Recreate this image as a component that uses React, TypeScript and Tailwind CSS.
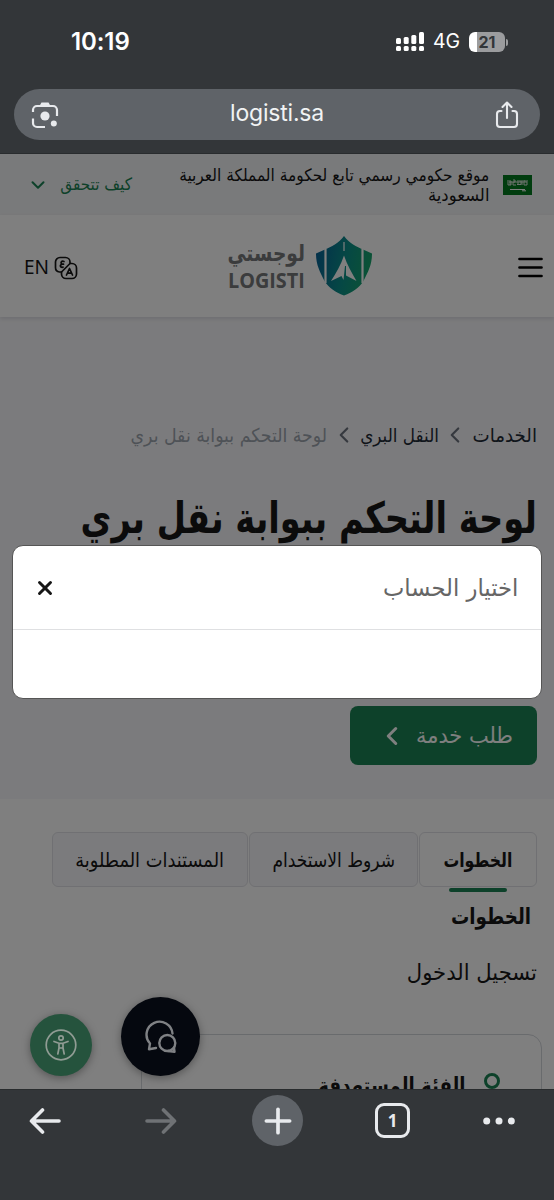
import { ReactNode } from 'react'
import { ChevronDown, ChevronLeft, Plus, X } from 'lucide-react'

function StatusBar() {
  return (
    <div className="flex h-[89px] items-start justify-between pl-[71px] pr-[46px] pt-[27px] text-white">
      <span className="font-['Inter'] text-[24px] font-semibold leading-[30px] tracking-[-0.1px]">10:19</span>
      <div className="flex h-[30px] items-center">
        <svg width="28" height="20" viewBox="0 0 28 20" fill="#fff">
          <rect x="0" y="6" width="5" height="6" rx="1.5" />
          <rect x="7.7" y="5" width="5" height="7" rx="1.5" />
          <rect x="15.3" y="3" width="5" height="9" rx="1.5" />
          <rect x="23" y="0" width="5" height="12" rx="1.5" />
          <rect x="0" y="14" width="5" height="5" rx="1.5" />
          <rect x="7.7" y="14" width="5" height="5" rx="1.5" />
          <rect x="15.3" y="14" width="5" height="5" rx="1.5" />
          <rect x="23" y="14" width="5" height="5" rx="1.5" />
        </svg>
        <span className="ml-[9px] w-[27px] font-['Inter'] text-[19.5px] tracking-[-0.2px]">4G</span>
        <div className="ml-[9px] flex h-5 w-9 items-center justify-center overflow-hidden rounded-[6px] bg-[linear-gradient(to_right,#fff_22%,#9b9c9e_22%)] font-['Inter'] text-[16px] font-bold text-[#333639]">
          21
        </div>
        <div className="ml-px h-[7px] w-[2px] rounded-r bg-[#9b9c9e]" />
      </div>
    </div>
  )
}

function AddressBar() {
  return (
    <div className="mx-[14px] flex h-[51px] items-center justify-between rounded-full bg-[#5f6368] px-[17px]">
      <svg width="28" height="28" viewBox="0 0 28 28" fill="none" stroke="#e8eaed" strokeWidth="2.2">
        <path d="M2 11V9a4 4 0 0 1 4-4h16a4 4 0 0 1 4 4v6M2 17.500V22a4 4 0 0 0 4 4h8" />
        <path d="M8.500 5l2-3.500h7l2 3.500z" fill="#e8eaed" stroke="none" />
        <circle cx="14" cy="15" r="4.600" fill="#e8eaed" stroke="none" />
        <circle cx="22.800" cy="22.600" r="3" fill="#e8eaed" stroke="none" />
      </svg>
      <span className="-mt-[2px] ml-[5px] font-['Inter'] text-[23px] tracking-[-0.2px] text-[#f1f3f4]">logisti.sa</span>
      <svg width="33" height="28" viewBox="0 0 33 28" fill="none" stroke="#e8eaed" strokeWidth="2.100" strokeLinecap="round" strokeLinejoin="round">
        <path d="M11.500 10H10a3 3 0 0 0-3 3v10a3 3 0 0 0 3 3h14a3 3 0 0 0 3-3V13a3 3 0 0 0-3-3h-1.500" />
        <path d="M17 17V2M12.500 6L17 1.500 21.500 6" />
      </svg>
    </div>
  )
}

function Flag() {
  return (
    <svg width="29" height="20" viewBox="0 0 29 20">
      <rect width="29" height="20" fill="#027a1e" />
      <path
        d="M5 5v5h3V6M7 5v5M10 5h2v2h-2v3h3M15 5v5M14 9.500h4V6h-2M19 5v5M21 5v5h3M24 5v5M22 5v2M6 7h18"
        fill="none"
        stroke="#dfe8df"
        strokeWidth="1"
      />
      <path d="M7 14.500h15M19 15.800h4" stroke="#fff" strokeWidth="1" />
    </svg>
  )
}

function Logo() {
  return (
    <div className="-mr-[4px] flex items-center gap-[10px]">
      <svg width="58" height="60" viewBox="0 0 58 60">
        <defs>
          <linearGradient id="shield" x1="0" x2="1" y1="0.2" y2="0.4">
            <stop offset="0" stopColor="#086096" />
            <stop offset="0.55" stopColor="#0b908a" />
            <stop offset="1" stopColor="#17a56b" />
          </linearGradient>
        </defs>
        <path
          d="M29 0c5 7 13 11 19 13.500L57 17.500C57 29 53 36 48.500 45 44 52 38 56 29 59.500 20 56 14 52 9.500 45 5 36 1 29 1 17.500l9-4C16 11 24 7 29 0z"
          fill="url(#shield)"
        />
        <path d="M10.500 13v34M47.500 13v34" stroke="#fff" strokeWidth="2.200" />
        <path d="M29 6v9" stroke="#fff" strokeWidth="1.200" />
        <path d="M29 19.500c3 9 8 18 12.500 25.500L31 39.500V30h-1l-1.500 14-2-4L16 45c5-7.500 10-16.500 13-25.500z" fill="#fff" />
      </svg>
      <div className="flex w-[77px] flex-col text-[#77787b]">
        <span className="origin-right scale-x-[0.81] whitespace-nowrap font-['DejaVu_Sans'] text-[23px] font-bold leading-[26px]">
          لوجستي
        </span>
        <span dir="ltr" className="origin-left scale-x-[0.9] whitespace-nowrap font-['Open_Sans'] text-[22px] font-bold leading-[26px]">
          LOGISTI
        </span>
      </div>
    </div>
  )
}

function TranslateIcon() {
  return (
    <svg width="24" height="24" viewBox="0 0 24 24" fill="none" stroke="#161616" strokeWidth="1.700" strokeLinecap="round" strokeLinejoin="round">
      <path d="M7 16H5.500A4.500 4.500 0 0 1 1.500 11.500V6A4.500 4.500 0 0 1 6 1.500h5.500A4.500 4.500 0 0 1 16 6v1.500L7.500 16z" />
      <path d="M16 7.500h2a4.500 4.500 0 0 1 4.500 4.500v6a4.500 4.500 0 0 1-4.500 4.500h-6A4.500 4.500 0 0 1 7.500 18v-2" />
      <path d="M10 5.500c-2.500-1-4 1.500-2 2.700h1.500M8 8.200c-2.500.8-2 3.500 1 3M12.500 19l3-6.500 3 6.500M13.500 17.200h4" />
    </svg>
  )
}

function Crumb({ children, className }: { children: ReactNode; className: string }) {
  return <span className={`origin-right whitespace-nowrap ${className}`}>{children}</span>
}

function Page() {
  return (
    <div dir="rtl" className="h-full bg-white font-['DejaVu_Sans',sans-serif] text-[#161616]">
      <div className="flex h-[61px] items-center bg-[#f3f4f6] pr-[22px] pl-[27px]">
        <Flag />
        <p className="mr-[14px] w-[311px] text-[17px] leading-[20px] whitespace-nowrap">
          <span className="inline-block origin-right scale-x-[0.906]">موقع حكومي رسمي تابع لحكومة المملكة العربية</span>
          <br />
          <span className="inline-block origin-right scale-x-[0.97]">السعودية</span>
        </p>
        <span className="mr-auto w-[72px] origin-right scale-x-[0.9] whitespace-nowrap text-[17px] text-[#1b8354]">
          كيف تتحقق
        </span>
        <ChevronDown className="mr-[11px] size-[22px] text-[#1b8354]" strokeWidth={2.2} />
      </div>
      <header className="relative flex h-[102px] items-center justify-between bg-white pr-[11px] pl-[24px] shadow-[0_2px_4px_rgba(30,30,60,0.12)]">
        <svg className="mt-[4px]" width="25" height="22" viewBox="0 0 25 22" stroke="#000" strokeWidth="2.700" strokeLinecap="round">
          <path d="M1.500 2h22M1.500 10.500h22M1.500 19h22" />
        </svg>
        <Logo />
        <div dir="ltr" className="mt-[3px] flex items-center gap-[5px]">
          <span className="font-['Noto_Sans'] text-[19px]">EN</span>
          <TranslateIcon />
        </div>
      </header>

      <section className="h-[482px] bg-[#f7f7fa] pr-[17px]">
        <nav className="flex h-[171px] items-end pb-[40px] text-[19px] leading-[26px] text-[#1f2a37]">
          <Crumb className="w-[64px] scale-x-[0.96]">الخدمات</Crumb>
          <ChevronLeft className="mr-[5px] ml-[3px] size-[26px] text-[#6c737f]" strokeWidth={2} />
          <Crumb className="w-[77px] scale-x-[0.886]">النقل البري</Crumb>
          <ChevronLeft className="mr-[5px] ml-[4px] size-[26px] text-[#6c737f]" strokeWidth={2} />
          <Crumb className="w-[197px] scale-x-[0.912] text-[#9da4ae]">لوحة التحكم ببوابة نقل بري</Crumb>
        </nav>
        <h1 className="h-[218px] text-[43px] font-bold leading-[60px]">
          <span className="block origin-right scale-x-[0.782] whitespace-nowrap">لوحة التحكم ببوابة نقل بري</span>
        </h1>
        <button className="flex h-[59px] w-[187px] items-center rounded-[8px] bg-[#1b8354] pr-[24px] text-[22px] text-white">
          <span className="w-[97px] origin-right scale-x-[0.95] whitespace-nowrap text-right">طلب خدمة</span>
          <ChevronLeft className="mr-[9px] size-[30px]" strokeWidth={2.4} />
        </button>
      </section>

      <section className="pt-[33px] pr-[17px]">
        <div className="flex gap-px text-[20px]">
          <div className="relative flex h-[55px] w-[118px] items-center justify-center rounded-[6px] border border-[#e0e1e6] font-bold">
            <span className="scale-x-[0.785]">الخطوات</span>
            <div className="absolute -bottom-[6px] h-[4px] w-[58px] rounded-full bg-[#1b8354]" />
          </div>
          <div className="flex h-[55px] w-[169px] items-center justify-center whitespace-nowrap rounded-[6px] border border-[#e0e1e6] bg-[#f7f7fa]">
            <span className="scale-x-[0.855]">شروط الاستخدام</span>
          </div>
          <div className="flex h-[55px] w-[196px] items-center justify-center whitespace-nowrap rounded-[6px] border border-[#e0e1e6] bg-[#f7f7fa]">
            <span className="scale-x-[0.89]">المستندات المطلوبة</span>
          </div>
        </div>
        <h2 className="mt-[12px] mr-[6px] origin-right scale-x-[0.83] text-[22px] font-bold leading-[36px]">الخطوات</h2>
        <p className="mt-[18px] origin-right scale-x-[0.96] text-[22px] leading-[40px]">تسجيل الدخول</p>
        <div className="mt-[41px] -mr-[5px] flex h-[160px] w-[401px] items-start rounded-[14px] border border-[#d2d6db] pt-[31px] pr-[41px]">
          <div className="mt-[7px] size-[16px] rounded-full border-[3px] border-[#1b8354]" />
          <h3 className="mr-[18px] origin-right scale-x-[0.825] whitespace-nowrap text-[22px] font-bold leading-[40px]">
            الفئة المستهدفة
          </h3>
        </div>
      </section>
    </div>
  )
}

function AccountDialog() {
  return (
    <div dir="rtl" className="absolute top-[391px] left-[12px] h-[154px] w-[530px] rounded-[11px] border border-[#555] bg-white font-['DejaVu_Sans',sans-serif]">
      <div className="flex h-[84px] items-center justify-between border-b border-[#dfe0e2] pr-[23px] pl-[21px]">
        <span className="origin-right scale-x-[0.945] text-[24px] text-[#666]">اختيار الحساب</span>
        <X className="size-[22px] text-[#161616]" strokeWidth={3.2} />
      </div>
    </div>
  )
}

function FloatingButtons() {
  return (
    <>
      <div className="absolute top-[860px] left-[30px] flex size-[62px] items-center justify-center rounded-full bg-[#25533d] shadow-[0_2px_8px_rgba(0,0,0,0.35)]">
        <svg width="32" height="32" viewBox="0 0 32 32" fill="none" stroke="#909c94" strokeWidth="1.700" strokeLinejoin="round" strokeLinecap="round">
          <circle cx="16" cy="16" r="14.800" />
          <circle cx="16" cy="9" r="2.200" />
          <path d="M9 12.500l5 1.800v4.700L12.800 25M23 12.500l-5 1.800v4.700L19.200 25M14 14.300h4M14.500 19h3" />
        </svg>
      </div>
      <div className="absolute top-[843px] left-[121px] flex size-[79px] items-center justify-center rounded-full bg-[#05080f] shadow-[0_2px_9px_rgba(0,0,0,0.35)]">
        <svg width="34" height="34" viewBox="0 0 34 34" fill="none" stroke="#7f8184" strokeWidth="2.400" strokeLinejoin="round" strokeLinecap="round">
          <path d="M28.500 13.500A13 13 0 1 0 6 23.500L5 29.200l7-1.200" />
          <circle cx="23.300" cy="23" r="8" />
          <path d="M24 31l6.500.800L30 27.500" />
        </svg>
      </div>
    </>
  )
}

function Arrow({ className }: { className: string }) {
  return (
    <svg
      className={className}
      width="32"
      height="28"
      viewBox="0 0 32 28"
      fill="none"
      stroke="currentColor"
      strokeWidth="3.600"
      strokeLinecap="round"
      strokeLinejoin="round"
    >
      <path d="M30 14H2.500M13.500 3L2.500 14l11 11" />
    </svg>
  )
}

function BottomBar() {
  return (
    <div className="flex h-[111px] items-start border-t border-[#292c2e] bg-[#333639] pt-[5px] text-[#e8eaed]">
      <Arrow className="mt-[12px] ml-[29px]" />
      <Arrow className="mt-[12px] ml-[84px] rotate-180 text-[#6f7275]" />
      <div className="ml-[75px] flex size-[51px] items-center justify-center rounded-full bg-[#5f6368]">
        <Plus className="size-[40px]" strokeWidth={2.2} />
      </div>
      <div className="mt-[8px] ml-[72px] flex size-[35px] items-center justify-center rounded-[9px] border-[3px] border-[#e8eaed] font-['Open_Sans'] text-[17px] font-bold">
        1
      </div>
      <svg className="mt-[21px] ml-[73px]" width="32" height="10" viewBox="0 0 32 10" fill="#e8eaed">
        <circle cx="3.700" cy="5" r="3.500" />
        <circle cx="16" cy="5" r="3.500" />
        <circle cx="28.300" cy="5" r="3.500" />
      </svg>
    </div>
  )
}

export default function App() {
  return (
    <div className="h-[1200px] w-[554px] overflow-hidden bg-[#333639]">
      <div className="h-[154px] border-b border-[#292c2e]">
        <StatusBar />
        <AddressBar />
      </div>
      <main className="relative h-[935px] overflow-hidden">
        <Page />
        <div className="absolute inset-0 bg-black/50" />
        <FloatingButtons />
        <AccountDialog />
      </main>
      <BottomBar />
    </div>
  )
}
